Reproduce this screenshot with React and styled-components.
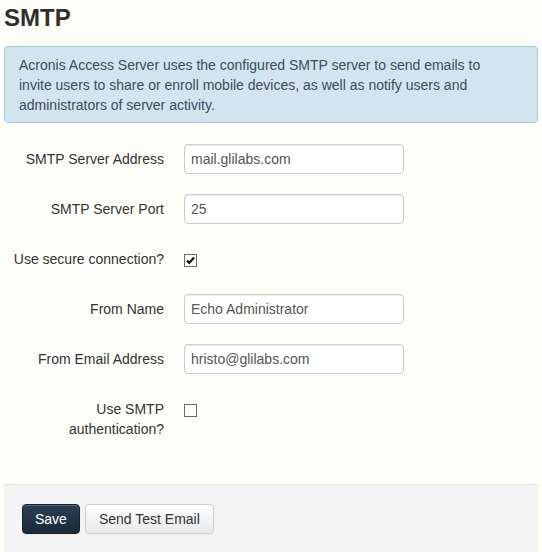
import React from 'react';
import styled, { createGlobalStyle } from 'styled-components';

const GlobalStyle = createGlobalStyle`
  html, body {
    margin: 0;
    padding: 0;
    overflow: hidden;
    background: #fefef8;
  }
  body {
    font-family: "Liberation Sans", Arial, sans-serif;
    font-size: 14px;
    line-height: 20px;
    color: #333;
  }
`;

const Page = styled.div`
  padding: 0 4px;
`;

const Title = styled.h1`
  margin: 3px 0 13px 0;
  font-size: 24px;
  line-height: 30px;
  font-weight: bold;
  color: #2e2e2e;
`;

const Alert = styled.div`
  padding: 8px 35px 7px 14px;
  background: #d2e5ef;
  border: 1px solid #9fd0dc;
  border-radius: 4px;
  color: #3d4a5c;
  margin-bottom: 21px;
`;

const Form = styled.form`
  margin: 0;
`;

const Row = styled.div`
  display: grid;
  grid-template-columns: 160px 1fr;
  column-gap: 20px;
  min-height: 30px;
  margin-bottom: 20px;
`;

const Label = styled.label`
  padding-top: 5px;
  text-align: right;
  color: #333;
`;

const Input = styled.input`
  box-sizing: border-box;
  width: 220px;
  height: 30px;
  padding: 4px 6px;
  border: 1px solid #ccc;
  border-radius: 4px;
  background: #fff;
  box-shadow: inset 0 1px 1px rgba(0, 0, 0, 0.075);
  font-family: inherit;
  font-size: 14px;
  line-height: 20px;
  color: #555;
  outline: none;
`;

const Check = styled.span`
  box-sizing: border-box;
  display: block;
  width: 13px;
  height: 13px;
  margin-top: 10px;
  border: 1px solid #6b6b6b;
  background: #fff;
  svg {
    display: block;
  }
`;

const Actions = styled.div`
  display: flex;
  gap: 5px;
  margin-top: 45px;
  padding: 19px 18px 18px;
  background: #f4f4f4;
  border-top: 1px solid #e2e2e2;
`;

const Button = styled.button`
  box-sizing: border-box;
  height: 30px;
  padding: 4px ${p => (p.$primary ? '12px' : '13px')};
  font-family: inherit;
  font-size: 14px;
  line-height: 20px;
  border-radius: 4px;
  cursor: pointer;
  color: ${p => (p.$primary ? '#fff' : '#333')};
  border: 1px solid ${p => (p.$primary ? '#17222e' : '#cfcfcf')};
  background: ${p =>
    p.$primary
      ? 'linear-gradient(#2c3f55, #1b2838)'
      : 'linear-gradient(#ffffff, #e8e8e8)'};
  box-shadow: inset 0 1px 0 rgba(255, 255, 255, 0.2), 0 1px 2px rgba(0, 0, 0, 0.05);
`;

const Checkbox = ({ checked }) => (
  <Check>
    {checked && (
      <svg width="11" height="11" viewBox="0 0 11 11">
        <path d="M2 5.6 L4.3 7.9 L9 2.6" fill="none" stroke="#111" strokeWidth="2.2" />
      </svg>
    )}
  </Check>
);

const fields = [
  { label: 'SMTP Server Address', value: 'mail.glilabs.com' },
  { label: 'SMTP Server Port', value: '25' },
  { label: 'Use secure connection?', check: true, checked: true },
  { label: 'From Name', value: 'Echo Administrator' },
  { label: 'From Email Address', value: 'hristo@glilabs.com' },
  { label: 'Use SMTP authentication?', check: true, checked: false },
];

const App = () => (
  <Page>
    <GlobalStyle />
    <Title>SMTP</Title>
    <Alert>
      Acronis Access Server uses the configured SMTP server to send emails to invite users to share
      or enroll mobile devices, as well as notify users and administrators of server activity.
    </Alert>
    <Form onSubmit={e => e.preventDefault()}>
      {fields.map(f => (
        <Row key={f.label}>
          <Label>{f.label}</Label>
          <div>
            {f.check ? <Checkbox checked={f.checked} /> : <Input defaultValue={f.value} />}
          </div>
        </Row>
      ))}
      <Actions>
        <Button $primary type="button">Save</Button>
        <Button type="button">Send Test Email</Button>
      </Actions>
    </Form>
  </Page>
);

export default App;
